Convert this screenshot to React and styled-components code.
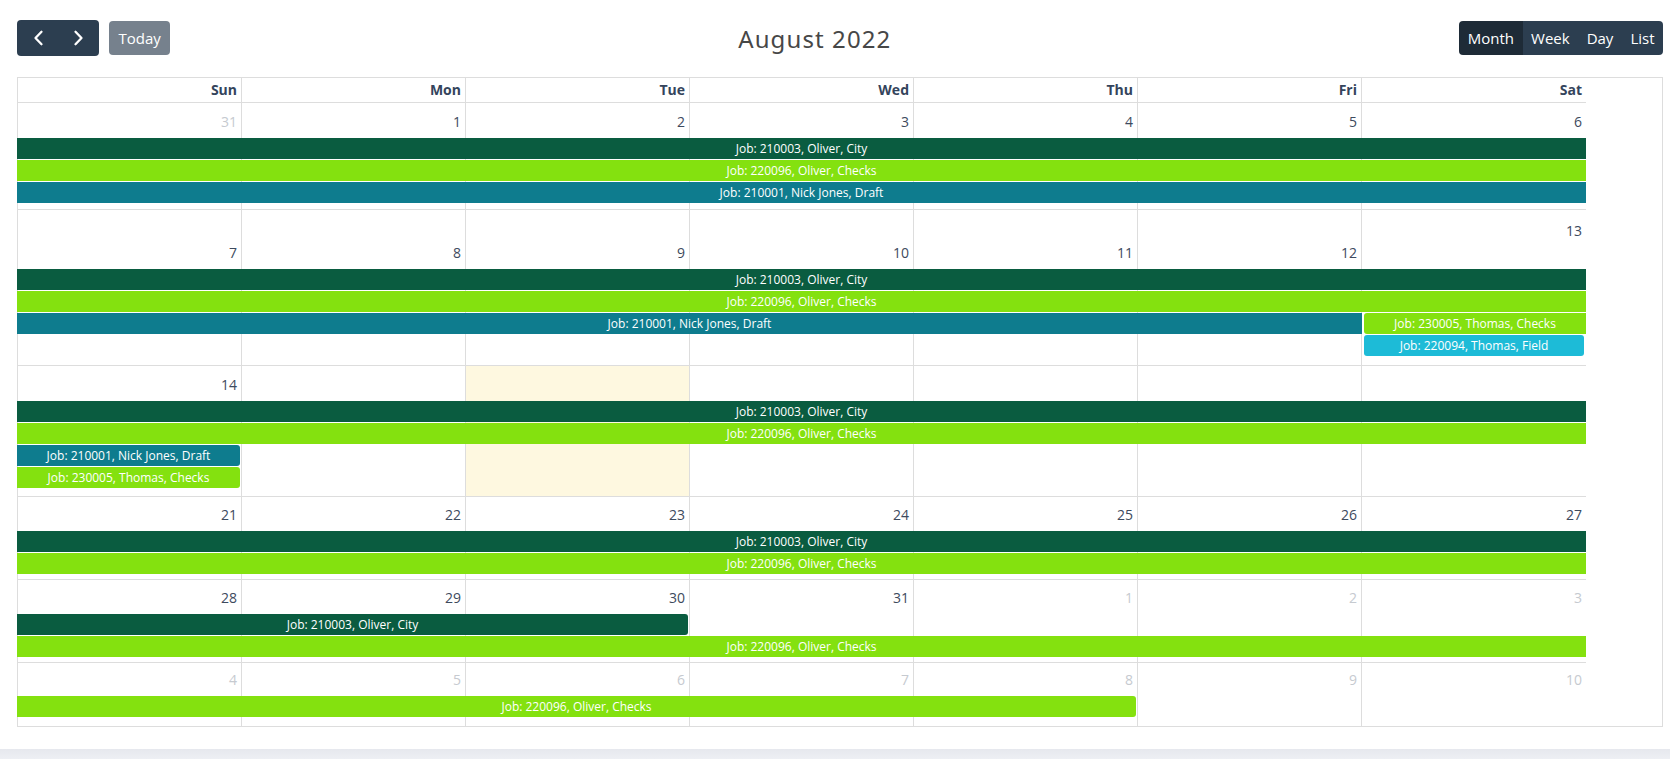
import React from "react";
import styled, { createGlobalStyle, css } from "styled-components";

const GlobalStyle = createGlobalStyle`
  html, body {
    margin: 0;
    padding: 0;
    background: #fff;
    font-family: "Open Sans", "Noto Sans", sans-serif;
  }
  * { box-sizing: border-box; }
`;

const COLORS = {
  green: "#0a5c40",
  lime: "#84e10f",
  teal: "#0e7c8e",
  cyan: "#1dbbd7",
};

const Page = styled.div`
  min-height: 759px;
  display: flex;
  flex-direction: column;
`;

const Main = styled.main`
  padding: 20px 7px 22px 17px;
  background: #fff;
`;

const Footer = styled.div`
  flex: 1;
  min-height: 11px;
  background: linear-gradient(#e6e8ee, #eef0f4);
`;

const Toolbar = styled.div`
  display: flex;
  justify-content: space-between;
  align-items: center;
  height: 36px;
  margin-bottom: 21px;
`;

const Chunk = styled.div`
  display: flex;
  align-items: center;
  gap: 10px;
`;

const Title = styled.h2`
  margin: 0;
  font-family: "Noto Sans", "Open Sans", sans-serif;
  font-weight: 400;
  font-size: 24px;
  letter-spacing: 1.1px;
  color: #474747;
`;

const ButtonGroup = styled.div`
  display: flex;
  border-radius: 4px;
  overflow: hidden;
`;

const Button = styled.button`
  border: none;
  margin: 0;
  height: ${(p) => (p.$tall ? 36 : 34)}px;
  padding: 0 ${(p) => (p.$icon ? 0 : 8.5)}px;
  width: ${(p) => (p.$icon ? "41px" : "auto")};
  display: flex;
  align-items: center;
  justify-content: center;
  font-family: "Open Sans", sans-serif;
  font-size: 15px;
  color: #fff;
  background: ${(p) => (p.$active ? "#1e2b37" : "#2c3e50")};
  cursor: pointer;
`;

const TodayButton = styled(Button)`
  background: #76818d;
  border-radius: 4px;
  padding: 0 9.5px;
  cursor: default;
`;

const Table = styled.div`
  border: 1px solid #ddd;
`;

const Grid = styled.div`
  width: 1568px;
`;

const HeaderRow = styled.div`
  display: grid;
  grid-template-columns: repeat(7, 224px);
  border-bottom: 1px solid #ddd;
`;

const HeaderCell = styled.div`
  height: 24px;
  padding: 2px 4px;
  text-align: right;
  font-size: 14px;
  line-height: 20px;
  font-weight: 700;
  color: #34445c;
  border-right: ${(p) => (p.$last ? "none" : "1px solid #ddd")};
`;

const Week = styled.div`
  display: grid;
  grid-template-columns: repeat(7, 224px);
  grid-template-rows: ${(p) => p.$top}px repeat(${(p) => p.$lanes}, 22px) 1fr;
  height: ${(p) => p.$height + (p.$last ? 0 : 1)}px;
  border-bottom: ${(p) => (p.$last ? "none" : "1px solid #ddd")};
`;

const DayCell = styled.div`
  grid-row: 1 / -1;
  grid-column: ${(p) => p.$col + 1};
  background: ${(p) => (p.$today ? "#fef8e0" : "transparent")};
  border-right: ${(p) => (p.$last ? "none" : "1px solid #ddd")};
`;

const DayTop = styled.div`
  height: ${(p) => p.$top}px;
  display: flex;
  justify-content: flex-end;
  align-items: ${(p) => (p.$alignTop ? "flex-start" : "flex-end")};
  padding: ${(p) => (p.$alignTop ? "11px 4px 0" : "0 4px 6px")};
`;

const DayNumber = styled.span`
  font-size: 14px;
  line-height: 20px;
  color: ${(p) => (p.$other ? "#c6cad0" : "#3d4a5d")};
`;

const Event = styled.div`
  grid-row: ${(p) => p.$lane + 2};
  grid-column: ${(p) => p.$start + 1} / span ${(p) => p.$span};
  height: 21px;
  background: ${(p) => COLORS[p.$color]};
  color: #fff;
  font-family: "Open Sans", sans-serif;
  font-size: 12px;
  line-height: 21px;
  text-align: center;
  white-space: nowrap;
  overflow: hidden;
  z-index: 1;
  margin-left: ${(p) => (p.$isStart ? 2 : -1)}px;
  margin-right: ${(p) => (p.$isEnd ? 2 : 0)}px;
  ${(p) =>
    p.$isStart &&
    css`
      border-top-left-radius: 3px;
      border-bottom-left-radius: 3px;
    `}
  ${(p) =>
    p.$isEnd &&
    css`
      border-top-right-radius: 3px;
      border-bottom-right-radius: 3px;
    `}
`;

const Chevron = ({ dir }) => (
  <svg width="12" height="16" viewBox="0 0 12 16" fill="none">
    <path
      d={dir === "left" ? "M9.5 1.8 L3.5 8 L9.5 14.2" : "M2.5 1.8 L8.5 8 L2.5 14.2"}
      stroke="#fff"
      strokeWidth="2.3"
      strokeLinecap="round"
      strokeLinejoin="round"
    />
  </svg>
);

const CITY = "Job: 210003, Oliver, City";
const CHECKS = "Job: 220096, Oliver, Checks";
const DRAFT = "Job: 210001, Nick Jones, Draft";
const THOMAS = "Job: 230005, Thomas, Checks";
const FIELD = "Job: 220094, Thomas, Field";

const full = (lane, color, text) => ({ lane, start: 0, span: 7, color, text });

const weeks = [
  {
    top: 35,
    height: 106,
    lanes: 3,
    days: [[31, true], [1], [2], [3], [4], [5], [6]],
    events: [full(0, "green", CITY), full(1, "lime", CHECKS), full(2, "teal", DRAFT)],
  },
  {
    top: 59,
    height: 155,
    lanes: 4,
    topAlignCol: 6,
    days: [[7], [8], [9], [10], [11], [12], [13]],
    events: [
      full(0, "green", CITY),
      full(1, "lime", CHECKS),
      { lane: 2, start: 0, span: 6, color: "teal", text: DRAFT },
      { lane: 2, start: 6, span: 1, color: "lime", text: THOMAS, isStart: true },
      { lane: 3, start: 6, span: 1, color: "cyan", text: FIELD, isStart: true, isEnd: true },
    ],
  },
  {
    top: 35,
    height: 130,
    lanes: 4,
    today: 2,
    days: [[14], [], [], [], [], [], []],
    events: [
      full(0, "green", CITY),
      full(1, "lime", CHECKS),
      { lane: 2, start: 0, span: 1, color: "teal", text: DRAFT, isEnd: true },
      { lane: 3, start: 0, span: 1, color: "lime", text: THOMAS, isEnd: true },
    ],
  },
  {
    top: 34,
    height: 82,
    lanes: 2,
    days: [[21], [22], [23], [24], [25], [26], [27]],
    events: [full(0, "green", CITY), full(1, "lime", CHECKS)],
  },
  {
    top: 34,
    height: 82,
    lanes: 2,
    days: [[28], [29], [30], [31], [1, true], [2, true], [3, true]],
    events: [
      { lane: 0, start: 0, span: 3, color: "green", text: CITY, isEnd: true },
      full(1, "lime", CHECKS),
    ],
  },
  {
    top: 33,
    height: 63,
    lanes: 1,
    days: [[4, true], [5, true], [6, true], [7, true], [8, true], [9, true], [10, true]],
    events: [{ lane: 0, start: 0, span: 5, color: "lime", text: CHECKS, isEnd: true }],
  },
];

const dayNames = ["Sun", "Mon", "Tue", "Wed", "Thu", "Fri", "Sat"];

export default function App() {
  return (
    <Page>
      <GlobalStyle />
      <Main>
        <Toolbar>
          <Chunk>
            <ButtonGroup>
              <Button $icon $tall aria-label="prev">
                <Chevron dir="left" />
              </Button>
              <Button $icon $tall aria-label="next">
                <Chevron dir="right" />
              </Button>
            </ButtonGroup>
            <TodayButton>Today</TodayButton>
          </Chunk>
          <Title>August 2022</Title>
          <Chunk>
            <ButtonGroup>
              <Button $active>Month</Button>
              <Button>Week</Button>
              <Button>Day</Button>
              <Button>List</Button>
            </ButtonGroup>
          </Chunk>
        </Toolbar>

        <Table>
          <Grid>
            <HeaderRow>
              {dayNames.map((d, i) => (
                <HeaderCell key={d} $last={i === 6}>
                  {d}
                </HeaderCell>
              ))}
            </HeaderRow>
            {weeks.map((w, wi) => (
              <Week
                key={wi}
                $top={w.top}
                $lanes={w.lanes}
                $height={w.height}
                $last={wi === weeks.length - 1}
              >
                {w.days.map(([n, other], di) => (
                  <DayCell key={di} $col={di} $last={di === 6} $today={w.today === di}>
                    <DayTop $top={w.top} $alignTop={w.topAlignCol === di}>
                      {n !== undefined && <DayNumber $other={other}>{n}</DayNumber>}
                    </DayTop>
                  </DayCell>
                ))}
                {w.events.map((e, ei) => (
                  <Event
                    key={ei}
                    $lane={e.lane}
                    $start={e.start}
                    $span={e.span}
                    $color={e.color}
                    $isStart={e.isStart}
                    $isEnd={e.isEnd}
                  >
                    {e.text}
                  </Event>
                ))}
              </Week>
            ))}
          </Grid>
        </Table>
      </Main>
      <Footer />
    </Page>
  );
}
